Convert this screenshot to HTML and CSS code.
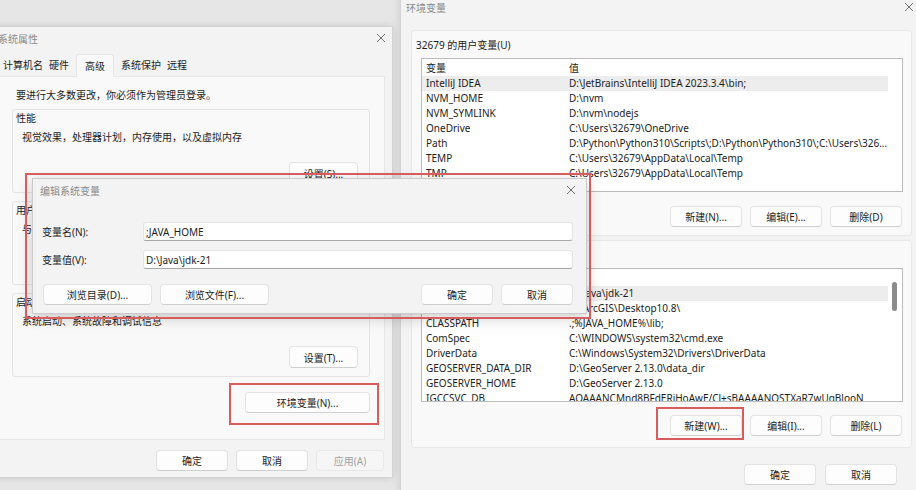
FILE: index.html
```html
<!DOCTYPE html>
<html lang="zh-CN">
<head>
    <meta charset="UTF-8">
    <title>环境变量</title>
    <link rel="stylesheet" href="styles.css">
</head>
<body>
<div class="desktop">

    <!-- 系统属性 -->
    <section class="window sysprops">
        <header class="titlebar">
            <span class="title">系统属性</span>
            <span class="close"><svg width="10" height="10" viewBox="0 0 10 10"><path d="M1 1L9 9M9 1L1 9" stroke="#707070" stroke-width="1"/></svg></span>
        </header>
        <nav class="tabs">
            <span class="tab">计算机名</span>
            <span class="tab">硬件</span>
            <span class="tab active">高级</span>
            <span class="tab">系统保护</span>
            <span class="tab">远程</span>
        </nav>
        <div class="tab-page">
            <p class="note">要进行大多数更改，你必须作为管理员登录。</p>
            <div class="group">
                <div class="group-label">性能</div>
                <p class="group-desc">视觉效果，处理器计划，内存使用，以及虚拟内存</p>
                <div class="group-actions"><button class="btn btn-sm">设置(S)...</button></div>
            </div>
            <div class="group">
                <div class="group-label">用户配置文件</div>
                <p class="group-desc">与登录帐户相关的桌面设置</p>
                <div class="group-actions"><button class="btn btn-sm">设置(E)...</button></div>
            </div>
            <div class="group">
                <div class="group-label">启动和故障恢复</div>
                <p class="group-desc">系统启动、系统故障和调试信息</p>
                <div class="group-actions"><button class="btn btn-sm">设置(T)...</button></div>
            </div>
            <div class="env-row"><button class="btn btn-env">环境变量(N)...</button></div>
        </div>
        <footer class="dlg-buttons">
            <button class="btn">确定</button>
            <button class="btn">取消</button>
            <button class="btn btn-apply" disabled>应用(A)</button>
        </footer>
    </section>

    <!-- 环境变量 -->
    <section class="window envvars">
        <header class="titlebar">
            <span class="title">环境变量</span>
            <span class="close"><svg width="10" height="10" viewBox="0 0 10 10"><path d="M1 1L9 9M9 1L1 9" stroke="#707070" stroke-width="1"/></svg></span>
        </header>
        <div class="env-body">
            <div class="panel">
                <div class="panel-label">32679 的用户变量(U)</div>
                <div class="list">
                    <div class="rows">
                        <div class="row"><span class="cell-name">变量</span><span class="cell-value">值</span></div>
                        <div class="row selected"><span class="cell-name">IntelliJ IDEA</span><span class="cell-value">D:\JetBrains\IntelliJ IDEA 2023.3.4\bin;</span></div>
                        <div class="row"><span class="cell-name">NVM_HOME</span><span class="cell-value">D:\nvm</span></div>
                        <div class="row"><span class="cell-name">NVM_SYMLINK</span><span class="cell-value">D:\nvm\nodejs</span></div>
                        <div class="row"><span class="cell-name">OneDrive</span><span class="cell-value">C:\Users\32679\OneDrive</span></div>
                        <div class="row"><span class="cell-name">Path</span><span class="cell-value">D:\Python\Python310\Scripts\;D:\Python\Python310\;C:\Users\326...</span></div>
                        <div class="row"><span class="cell-name">TEMP</span><span class="cell-value">C:\Users\32679\AppData\Local\Temp</span></div>
                        <div class="row"><span class="cell-name">TMP</span><span class="cell-value">C:\Users\32679\AppData\Local\Temp</span></div>
                    </div>
                    <div class="scrollbar"></div>
                </div>
                <div class="panel-buttons">
                    <button class="btn">新建(N)...</button>
                    <button class="btn">编辑(E)...</button>
                    <button class="btn">删除(D)</button>
                </div>
            </div>

            <div class="panel">
                <div class="panel-label">系统变量(S)</div>
                <div class="list">
                    <div class="rows">
                        <div class="row"><span class="cell-name">变量</span><span class="cell-value">值</span></div>
                        <div class="row selected"><span class="cell-name">JAVA_HOME</span><span class="cell-value">D:\Java\jdk-21</span></div>
                        <div class="row"><span class="cell-name">AGSDESKTOPJAVA</span><span class="cell-value">D:\ArcGIS\Desktop10.8\</span></div>
                        <div class="row"><span class="cell-name">CLASSPATH</span><span class="cell-value">.;%JAVA_HOME%\lib;</span></div>
                        <div class="row"><span class="cell-name">ComSpec</span><span class="cell-value">C:\WINDOWS\system32\cmd.exe</span></div>
                        <div class="row"><span class="cell-name">DriverData</span><span class="cell-value">C:\Windows\System32\Drivers\DriverData</span></div>
                        <div class="row"><span class="cell-name">GEOSERVER_DATA_DIR</span><span class="cell-value">D:\GeoServer 2.13.0\data_dir</span></div>
                        <div class="row"><span class="cell-name">GEOSERVER_HOME</span><span class="cell-value">D:\GeoServer 2.13.0</span></div>
                        <div class="row"><span class="cell-name">IGCCSVC_DB</span><span class="cell-value">AQAAANCMnd8BFdERjHoAwE/Cl+sBAAAANOSTXaR7wUqBlooN</span></div>
                    </div>
                    <div class="scrollbar"><div class="thumb"></div></div>
                </div>
                <div class="panel-buttons">
                    <button class="btn">新建(W)...</button>
                    <button class="btn">编辑(I)...</button>
                    <button class="btn">删除(L)</button>
                </div>
            </div>

            <footer class="env-footer">
                <button class="btn">确定</button>
                <button class="btn">取消</button>
            </footer>
        </div>
    </section>

    <!-- 编辑系统变量 -->
    <section class="window editvar">
        <header class="titlebar">
            <span class="title">编辑系统变量</span>
            <span class="close"><svg width="10" height="10" viewBox="0 0 10 10"><path d="M1 1L9 9M9 1L1 9" stroke="#707070" stroke-width="1"/></svg></span>
        </header>
        <div class="form">
            <label class="form-label">变量名(N):</label>
            <div class="input">;JAVA_HOME</div>
            <label class="form-label">变量值(V):</label>
            <div class="input">D:\Java\jdk-21</div>
        </div>
        <div class="edit-buttons">
            <button class="btn btn-browse">浏览目录(D)...</button>
            <button class="btn btn-browse">浏览文件(F)...</button>
            <span class="spacer"></span>
            <button class="btn">确定</button>
            <button class="btn">取消</button>
        </div>
    </section>

    <!-- 标注框 -->
    <div class="mark mark-dialog"></div>
    <div class="mark mark-env"></div>
    <div class="mark mark-new"></div>
</div>
</body>
</html>
```

FILE: styles.css
```css
* {
    box-sizing: border-box;
}

body {
    margin: 0;
    font-family: "Noto Sans", "Noto Sans CJK SC", sans-serif;
    font-size: 10px;
    color: #1c1c1c;
}

p {
    margin: 0;
}

.desktop {
    position: relative;
    width: 916px;
    height: 490px;
    overflow: hidden;
    background: #e6e6e6;
}

/* windows */
.window {
    position: absolute;
    display: flex;
    flex-direction: column;
    background: #f3f3f3;
    border: 1px solid #d4d4d4;
    box-shadow: 0 0 8px rgba(0,0,0,0.12);
}

.sysprops {
    left: -10px;
    top: 26px;
    width: 403px;
    height: 452px;
}

.envvars {
    left: 400px;
    top: -6px;
    width: 520px;
    height: 500px;
}

.editvar {
    left: 32px;
    top: 178px;
    width: 555px;
    height: 136px;
    border-color: #cbcbcb;
    box-shadow: 0 4px 14px rgba(0,0,0,0.2);
}

.titlebar {
    flex: none;
    display: flex;
    align-items: center;
    justify-content: space-between;
    height: 22px;
    padding: 0 6px 0 7px;
    color: #8a8a8a;
}

.envvars .titlebar {
    height: 24px;
    padding: 0 5px 0 5px;
}

.editvar .titlebar {
    padding: 0 10px 0 7px;
}

.close svg {
    display: block;
}

/* buttons */
.btn {
    flex: none;
    width: 72px;
    height: 21px;
    padding: 0;
    font: inherit;
    color: inherit;
    background: #fdfdfd;
    border: 1px solid #e3e3e3;
    border-bottom-color: #cfcfcf;
    border-radius: 4px;
}

.btn:disabled {
    color: #a3a3a3;
    background: #f6f6f6;
    border-color: #e8e8e8;
}

.btn-sm {
    width: 69px;
    height: 22px;
}

.btn-env {
    width: 125px;
}

.btn-browse {
    width: 109px;
}

.btn-apply {
    width: 68px;
}

/* 系统属性 */
.tabs {
    flex: none;
    display: flex;
    height: 22px;
    margin: 5px 7px 0;
    padding-left: 2px;
}

.tab {
    padding: 0 3px;
    line-height: 22px;
}

.tab.active {
    margin: 0 4px -1px;
    padding: 0 8px;
    background: #f9f9f9;
    border: 1px solid #e6e6e6;
    border-bottom: none;
    border-radius: 3px 3px 0 0;
    position: relative;
}

.tab-page {
    flex: none;
    height: 364px;
    margin: 0 7px;
    padding: 11px 14px 0 13px;
    background: #f9f9f9;
    border: 1px solid #e6e6e6;
}

.note {
    margin-left: 4px;
    line-height: 14px;
}

.group {
    margin-top: 8px;
    padding: 1px 11px 8px 3px;
    border: 1px solid #e4e4e4;
    border-radius: 3px;
}

.note + .group {
    margin-top: 7px;
}

.group-label {
    line-height: 14px;
}

.group-desc {
    margin: 5px 0 0 6px;
    line-height: 14px;
}

.group-actions {
    display: flex;
    justify-content: flex-end;
    margin-top: 18px;
}

.env-row {
    display: flex;
    justify-content: flex-end;
    margin-top: 15px;
}

.dlg-buttons {
    display: flex;
    justify-content: flex-end;
    gap: 8px;
    margin-top: 10px;
    padding-right: 8px;
}

/* 环境变量 */
.env-body {
    padding: 11px 7px 0 10px;
}

.panel {
    padding: 7px 9px 8px 4px;
    background: #f9f9f9;
    border: 1px solid #e8e8e8;
    border-radius: 4px;
}

.panel + .panel {
    margin-top: 4px;
    padding-bottom: 11px;
}

.panel-label {
    line-height: 14px;
}

.list {
    display: flex;
    height: 134px;
    margin: 6px -1px 0 5px;
    background: #fff;
    border: 1px solid #bcbcbc;
}

.rows {
    flex: 1;
    padding-top: 2px;
    overflow: hidden;
}

.row {
    display: flex;
    height: 15px;
    line-height: 15px;
    white-space: nowrap;
}

.row.selected {
    background: #ededed;
}

.cell-name {
    flex: none;
    width: 147px;
    padding-left: 4px;
    overflow: hidden;
}

.cell-value {
    flex: 1;
    overflow: hidden;
}

.scrollbar {
    flex: none;
    width: 14px;
}

.thumb {
    width: 5px;
    height: 29px;
    margin: 13px 0 0 4px;
    background: #8b8b8b;
    border-radius: 3px;
}

.panel-buttons {
    display: flex;
    justify-content: flex-end;
    gap: 8px;
    margin-top: 14px;
}

.panel + .panel .panel-buttons {
    margin-top: 13px;
}

.env-footer {
    display: flex;
    justify-content: flex-end;
    gap: 9px;
    margin: 16px 15px 0 0;
}

/* 编辑系统变量 */
.form {
    display: grid;
    grid-template-columns: 101px 430px;
    row-gap: 9px;
    margin-top: 21px;
    padding-left: 9px;
}

.form-label {
    align-self: center;
}

.input {
    height: 19px;
    padding-left: 2px;
    line-height: 18px;
    background: #fff;
    border: 1px solid #e4e4e4;
    border-bottom-color: #a8a8a8;
    border-radius: 3px;
}

.edit-buttons {
    display: flex;
    gap: 8px;
    margin-top: 15px;
    padding: 0 13px 0 10px;
}

.spacer {
    flex: 1;
}

/* red annotation boxes */
.mark {
    position: absolute;
    border: 2px solid #d95c5c;
}

.mark-dialog {
    left: 25px;
    top: 173px;
    width: 566px;
    height: 146px;
}

.mark-env {
    left: 229px;
    top: 383px;
    width: 150px;
    height: 42px;
}

.mark-new {
    left: 656px;
    top: 407px;
    width: 88px;
    height: 33px;
}
```
